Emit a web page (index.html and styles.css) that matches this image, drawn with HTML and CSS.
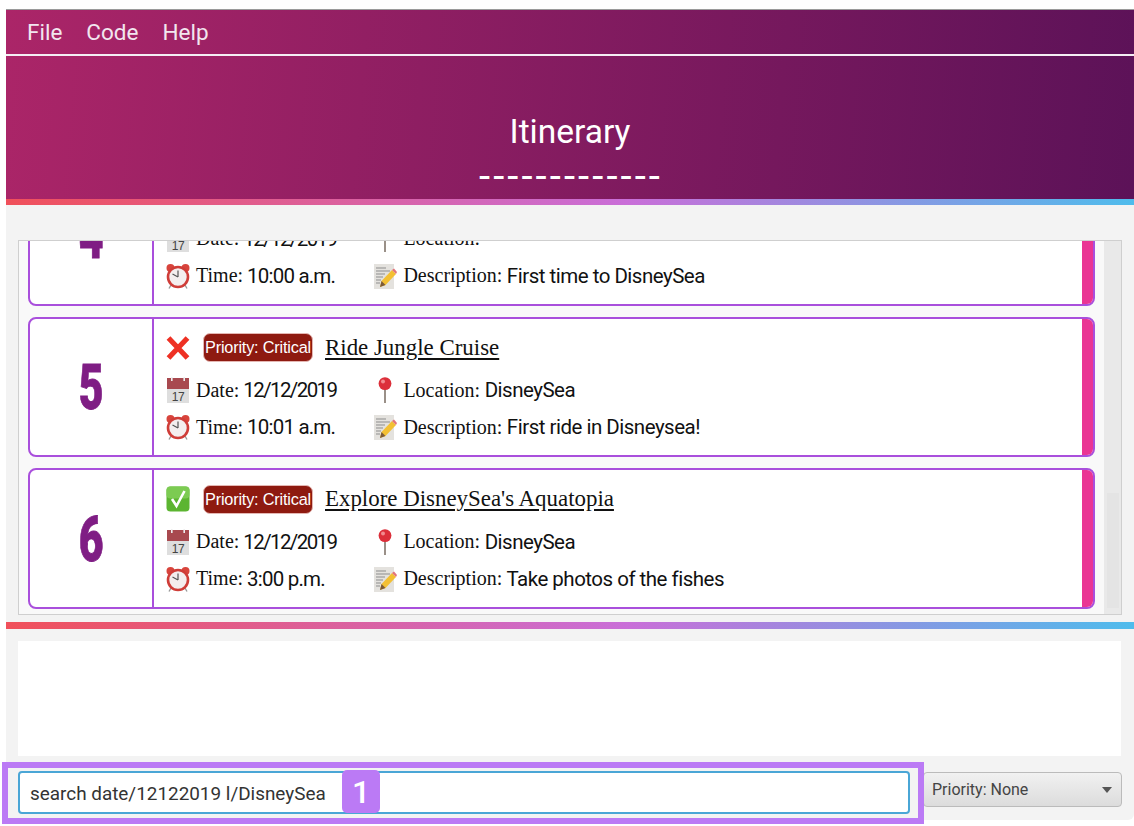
FILE: index.html
```html
<!DOCTYPE html>
<html>
<head>
    <title>Itinerary</title>
    <link rel="stylesheet" href="styles.css">
</head>
<body>
    <svg class="icon-defs">
        <symbol id="i-cross" viewBox="0 0 24 26">
            <path d="M2.5 3 L21.5 23 M21.5 3 L2.5 23" stroke="#ee3124" stroke-width="5.2" fill="none"/>
        </symbol>
        <symbol id="i-check" viewBox="0 0 24 26">
            <rect x="0.5" y="0.5" width="23" height="25" rx="4" fill="#5cb531"/>
            <rect x="0.5" y="0.5" width="23" height="12" rx="4" fill="#7ccb52"/>
            <path d="M6 13 L10.5 20 L18.5 5" stroke="#fff" stroke-width="2.6" fill="none"/>
        </symbol>
        <symbol id="i-cal" viewBox="0 0 24 26">
            <rect x="1" y="1" width="22" height="25" fill="#dedede"/>
            <rect x="1" y="1" width="22" height="11" fill="#a8494f"/>
            <rect x="5" y="0" width="1.6" height="4" fill="#eee"/>
            <rect x="17.4" y="0" width="1.6" height="4" fill="#eee"/>
            <text x="12" y="24" text-anchor="middle" class="cal-day">17</text>
        </symbol>
        <symbol id="i-clock" viewBox="0 0 24 26">
            <circle cx="4.5" cy="5" r="4" fill="#d8443c"/>
            <circle cx="19.5" cy="5" r="4" fill="#d8443c"/>
            <path d="M5 22 L3 25.5 M19 22 L21 25.5" stroke="#999" stroke-width="1.4"/>
            <circle cx="12" cy="14" r="10" fill="#f4eeee" stroke="#cf3d38" stroke-width="2.6"/>
            <path d="M12 14 L12 7.5 M12 14 L6.5 11" stroke="#555" stroke-width="1.2"/>
        </symbol>
        <symbol id="i-pin" viewBox="0 0 24 26">
            <rect x="11" y="9" width="2" height="17" fill="#9a9088"/>
            <circle cx="12" cy="6.6" r="6.4" fill="#dc2f3a"/>
            <circle cx="10" cy="4.6" r="2" fill="#f28b8f"/>
        </symbol>
        <symbol id="i-memo" viewBox="0 0 24 26">
            <rect x="1" y="1" width="20" height="25" fill="#e4e2de"/>
            <path d="M3 5 H13 M3 8 H17 M3 11 H12 M3 14 H10 M3 17 H8 M3 20 H7" stroke="#8d8d8d" stroke-width="1"/>
            <path d="M7 24 L8.5 18 L19 7 L23 11 L12.5 22 Z" fill="#f3c033"/>
            <path d="M7 24 L8.5 18 L12.5 22 Z" fill="#7b5a3a"/>
            <path d="M19 7 L21 5.5 L24 9 L23 11 Z" fill="#e2747a"/>
        </symbol>
    </svg>

    <div class="window">
        <div class="top">
            <div class="menu">
                <span>File</span>
                <span>Code</span>
                <span>Help</span>
            </div>
            <div class="title">
                <div class="title-name">Itinerary</div>
                <div class="title-dash">-------------</div>
            </div>
        </div>
        <div class="rainbow"></div>

        <div class="list-panel">
            <div class="list">
                <div class="cards">
                    <div class="card">
                        <div class="card-num"><span>4</span></div>
                        <div class="card-body">
                            <div class="card-head">
                                <svg class="icon"><use href="#i-check"/></svg>
                                <span class="badge">Priority: Critical</span>
                                <span class="card-title">Arrive at DisneySea</span>
                            </div>
                            <div class="card-info">
                                <div class="info"><svg class="icon"><use href="#i-cal"/></svg><span class="lbl">Date:</span><span class="date">12/12/2019</span></div>
                                <div class="info"><svg class="icon"><use href="#i-pin"/></svg><span class="lbl">Location:</span> -</div>
                                <div class="info"><svg class="icon"><use href="#i-clock"/></svg><span class="lbl">Time:</span><span class="time">10:00 a.m.</span></div>
                                <div class="info"><svg class="icon"><use href="#i-memo"/></svg><span class="lbl">Description:</span> First time to DisneySea</div>
                            </div>
                        </div>
                        <div class="card-bar"></div>
                    </div>
                    <div class="card">
                        <div class="card-num"><span>5</span></div>
                        <div class="card-body">
                            <div class="card-head">
                                <svg class="icon"><use href="#i-cross"/></svg>
                                <span class="badge">Priority: Critical</span>
                                <span class="card-title">Ride Jungle Cruise</span>
                            </div>
                            <div class="card-info">
                                <div class="info"><svg class="icon"><use href="#i-cal"/></svg><span class="lbl">Date:</span><span class="date">12/12/2019</span></div>
                                <div class="info"><svg class="icon"><use href="#i-pin"/></svg><span class="lbl">Location:</span> DisneySea</div>
                                <div class="info"><svg class="icon"><use href="#i-clock"/></svg><span class="lbl">Time:</span><span class="time">10:01 a.m.</span></div>
                                <div class="info"><svg class="icon"><use href="#i-memo"/></svg><span class="lbl">Description:</span> First ride in Disneysea!</div>
                            </div>
                        </div>
                        <div class="card-bar"></div>
                    </div>
                    <div class="card">
                        <div class="card-num"><span>6</span></div>
                        <div class="card-body">
                            <div class="card-head">
                                <svg class="icon"><use href="#i-check"/></svg>
                                <span class="badge">Priority: Critical</span>
                                <span class="card-title">Explore DisneySea's Aquatopia</span>
                            </div>
                            <div class="card-info">
                                <div class="info"><svg class="icon"><use href="#i-cal"/></svg><span class="lbl">Date:</span><span class="date">12/12/2019</span></div>
                                <div class="info"><svg class="icon"><use href="#i-pin"/></svg><span class="lbl">Location:</span> DisneySea</div>
                                <div class="info"><svg class="icon"><use href="#i-clock"/></svg><span class="lbl">Time:</span><span class="time">3:00 p.m.</span></div>
                                <div class="info"><svg class="icon"><use href="#i-memo"/></svg><span class="lbl">Description:</span> Take photos of the fishes</div>
                            </div>
                        </div>
                        <div class="card-bar"></div>
                    </div>
                </div>
            </div>
            <div class="scrollbar"><div class="thumb"></div></div>
        </div>

        <div class="rainbow rainbow-low"></div>
        <div class="results"></div>

        <div class="command-row">
            <div class="command">search date/12122019 l/DisneySea</div>
            <div class="priority">
                <span>Priority: None</span>
                <span class="arrow"></span>
            </div>
        </div>
    </div>

    <div class="callout"></div>
    <div class="callout-num">1</div>
</body>
</html>
```

FILE: styles.css
```css
html, body {
    margin: 0;
    height: 826px;
    overflow: hidden;
    background-color: #fff;
}
body {
    position: relative;
    font-family: "Liberation Sans", Arial, sans-serif;
}
.icon-defs {
    position: absolute;
    width: 0;
    height: 0;
}
.cal-day {
    font-family: "Liberation Sans", sans-serif;
    font-size: 12px;
    fill: #444;
}
.window {
    margin: 9px 0 0 6px;
    height: 811px;
    background-color: #f3f3f3;
    border-top: 1px solid #9a9a9a;
    border-bottom-right-radius: 6px;
    box-sizing: border-box;
}

/* header */
.top {
    background: linear-gradient(95deg, #ab2568 0%, #5c1258 100%);
}
.menu {
    height: 44px;
    border-bottom: 2px solid #f4eef4;
    display: flex;
    align-items: center;
    gap: 24px;
    padding-left: 21px;
    color: #f2e6ef;
    font-family: Roboto, sans-serif;
    font-size: 22.5px;
}
.title {
    height: 143px;
    color: #fff;
    text-align: center;
    font-family: Roboto, sans-serif;
}
.title-name {
    padding-top: 54px;
    font-size: 33.5px;
    line-height: 44px;
}
.title-dash {
    margin: 6px 0 0 2px;
    font-size: 40px;
    line-height: 34px;
    letter-spacing: 3.1px;
}
.rainbow {
    height: 6px;
    background: linear-gradient(90deg, #f0505a 0%, #c96ed8 55%, #4fbcec 100%);
}
.rainbow-low {
    height: 7px;
    margin-top: 7px;
}

/* list */
.list-panel {
    margin: 35px 12px 0;
    height: 375px;
    border: 1px solid #cfcfcf;
    background-color: #f9f9f9;
    display: flex;
    box-sizing: border-box;
}
.list {
    flex: 1;
    overflow: hidden;
}
.cards {
    margin: -76px 1px 0 9px;
    display: flex;
    flex-direction: column;
    gap: 11px;
}
.card {
    height: 140.5px;
    flex: none;
    box-sizing: border-box;
    display: flex;
    background-color: #fff;
    border: 2px solid #a94fdc;
    border-radius: 8px;
    overflow: hidden;
}
.card-num {
    width: 124px;
    flex: none;
    box-sizing: border-box;
    padding-top: 2px;
    border-right: 2px solid #a94fdc;
    display: flex;
    align-items: center;
    justify-content: center;
    color: #7f1d84;
    font-family: Roboto, sans-serif;
    font-weight: 900;
    font-size: 63px;
    -webkit-text-stroke: 0.8px #7f1d84;
}
.card-num span {
    display: inline-block;
    transform: scaleX(0.68);
}
.card-body {
    flex: 1;
    padding: 14px 0 0 12px;
}
.card-head {
    display: flex;
    align-items: center;
    height: 30px;
}
.card-head .icon {
    width: 24px;
    height: 26px;
}
.badge {
    margin-left: 13px;
    width: 110px;
    height: 29px;
    box-sizing: border-box;
    display: flex;
    align-items: center;
    justify-content: center;
    white-space: nowrap;
    background-color: #8e1a10;
    border: 1px solid #e4b7b3;
    border-radius: 7px;
    color: #fff;
    font-size: 16.3px;
    letter-spacing: -0.2px;
}
.card-title {
    margin-left: 12px;
    font-family: "Liberation Serif", serif;
    font-size: 22.9px;
    color: #111;
    text-decoration: underline;
    text-underline-offset: 3px;
    white-space: nowrap;
}
.card-info {
    margin-top: 13px;
    display: grid;
    grid-template-columns: max-content max-content;
    column-gap: 37px;
    row-gap: 8px;
}
.info {
    display: flex;
    align-items: center;
    height: 29px;
    font-family: Roboto, sans-serif;
    font-size: 20.5px;
    letter-spacing: -0.5px;
    color: #111;
    white-space: pre;
}
.info .icon {
    width: 24px;
    height: 26px;
    margin-right: 6px;
    flex: none;
}
.lbl {
    font-family: "Liberation Serif", serif;
    font-size: 20px;
    letter-spacing: 0;
}
.date {
    margin-left: 4px;
    letter-spacing: -1.6px;
}
.time {
    margin-left: 4px;
    letter-spacing: -0.8px;
}
.card-bar {
    width: 11px;
    flex: none;
    background-color: #ea3594;
}
.scrollbar {
    width: 17px;
    flex: none;
    margin-left: 8px;
    background-color: #e9e9e9;
    display: flex;
    flex-direction: column;
    justify-content: flex-end;
    align-items: center;
    padding-bottom: 6px;
    box-sizing: border-box;
}
.thumb {
    width: 12px;
    height: 115px;
    background-color: #e4e4e4;
}

/* results */
.results {
    margin: 12px 13px 0 12px;
    height: 115px;
    background-color: #fff;
}

/* command box */
.command-row {
    margin: 15px 12px 0;
    display: flex;
    align-items: flex-start;
    gap: 13px;
}
.command {
    width: 892px;
    height: 43px;
    flex: none;
    box-sizing: border-box;
    border: 2px solid #4aa6d6;
    border-radius: 4px;
    background-color: #fff;
    padding-left: 10px;
    line-height: 41px;
    font-family: Roboto, sans-serif;
    font-size: 18.9px;
    color: #333;
}
.priority {
    flex: 1;
    height: 35px;
    margin-top: 1px;
    box-sizing: border-box;
    border: 1px solid #bbb;
    border-radius: 4px;
    background: linear-gradient(180deg, #f1f1f1 0%, #dcdcdc 100%);
    display: flex;
    align-items: center;
    justify-content: space-between;
    padding: 0 9px 0 8px;
    font-family: Roboto, sans-serif;
    font-size: 16px;
    color: #444;
}
.arrow {
    width: 0;
    height: 0;
    border-left: 5.5px solid transparent;
    border-right: 5.5px solid transparent;
    border-top: 6px solid #555;
}

/* annotation over the window */
.callout {
    position: absolute;
    left: 2px;
    top: 762px;
    width: 922px;
    height: 62px;
    box-sizing: border-box;
    border: 6px solid #bb7af5;
}
.callout-num {
    position: absolute;
    left: 342px;
    top: 770px;
    width: 38px;
    height: 43px;
    border-radius: 5px;
    background-color: #bb7af5;
    color: #fff;
    font-family: Roboto, sans-serif;
    font-size: 32px;
    font-weight: 500;
    line-height: 44px;
    text-align: center;
}
```
